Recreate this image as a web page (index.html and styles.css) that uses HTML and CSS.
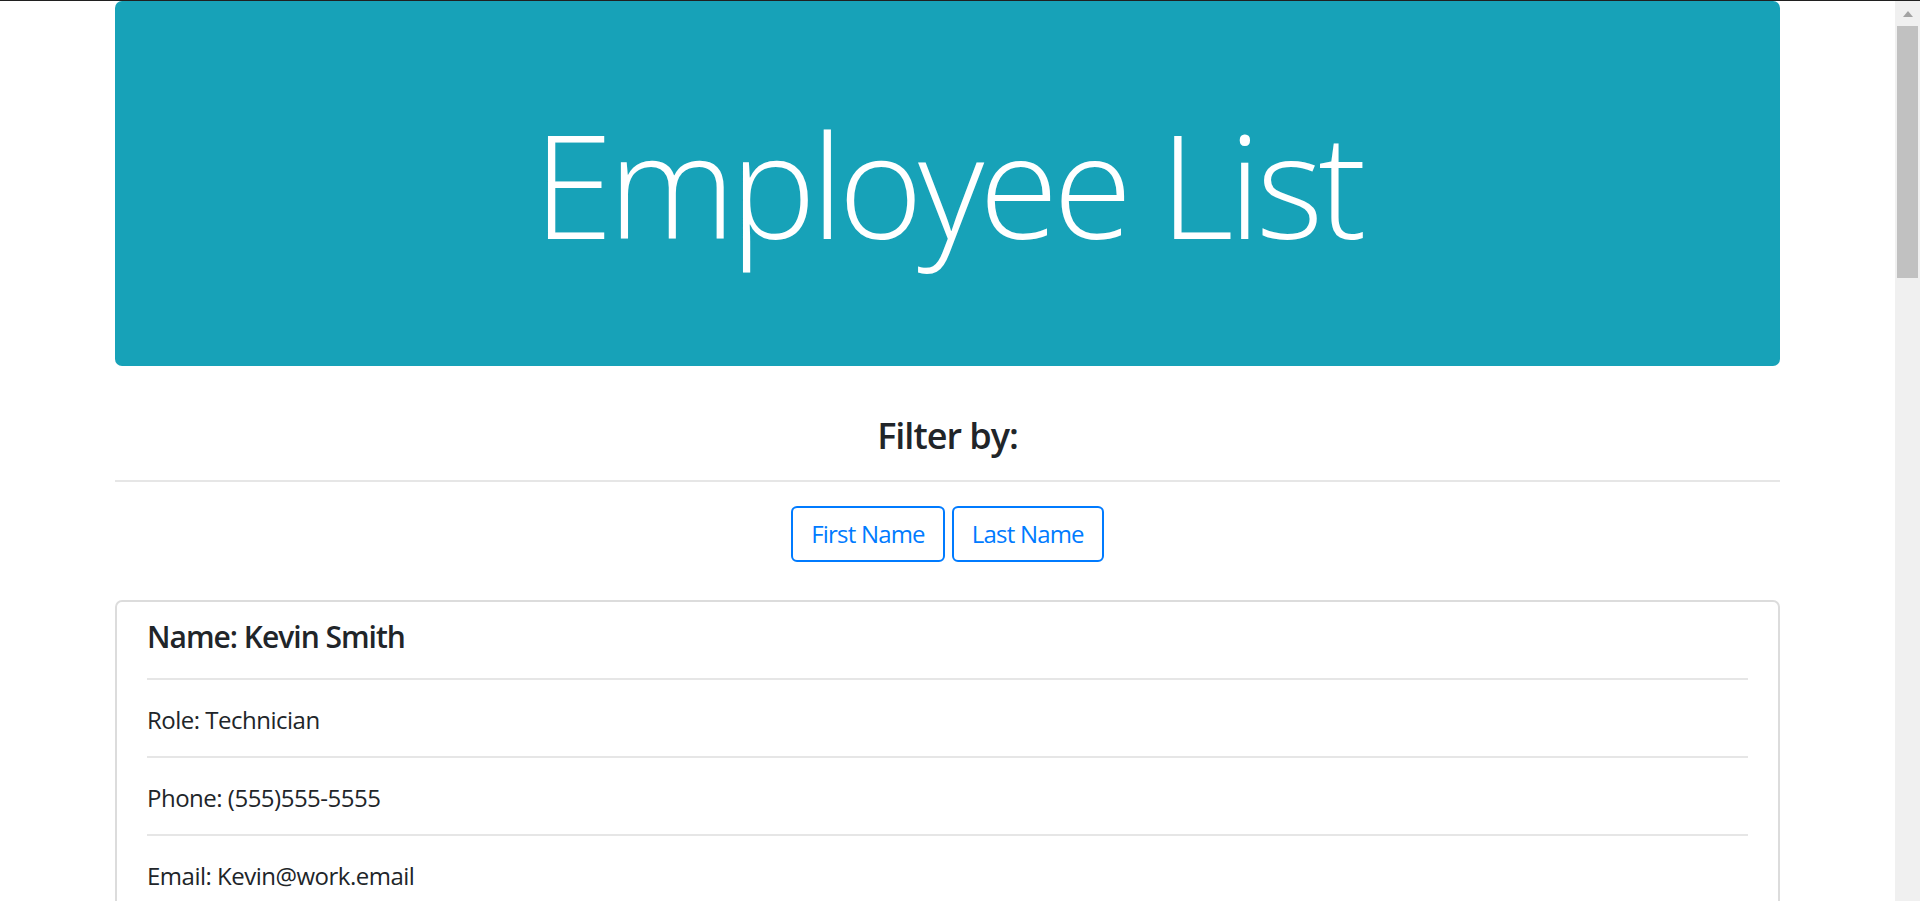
FILE: index.html
```html
<!DOCTYPE html>
<html lang="en">
<head>
<meta charset="utf-8">
<title>Employee List</title>
<link rel="stylesheet" href="styles.css">
</head>
<body>
<div class="page">
  <div class="container">
    <div class="jumbotron">
      <h1 class="display">Employee List</h1>
    </div>
    <h4 class="filter-title">Filter by:</h4>
    <hr class="rule">
    <div class="btn-row">
      <button class="btn">First Name</button>
      <button class="btn">Last Name</button>
    </div>
    <div class="card">
      <div class="card-body">
        <div class="row title-row"><h5 class="card-title">Name: Kevin Smith</h5></div>
        <div class="row">Role: Technician</div>
        <div class="row">Phone: (555)555-5555</div>
        <div class="row last-row">Email: Kevin@work.email</div>
      </div>
    </div>
  </div>
</div>
<div class="scrollbar">
  <div class="sb-arrow"></div>
  <div class="sb-thumb"></div>
</div>
</body>
</html>
```

FILE: styles.css
```css
html, body {
  margin: 0;
  padding: 0;
}
body {
  height: 901px;
  box-sizing: border-box;
  border-top: 1px solid #202020;
  display: flex;
  overflow: hidden;
  font-family: "Open Sans", "Noto Sans", sans-serif;
  color: #212529;
  background: #fff;
}
.page {
  flex: 1;
  overflow: hidden;
}
.container {
  width: 1665px;
  margin: 0 auto;
}
.jumbotron {
  background: #17a2b8;
  border-radius: 7px;
  padding: 96px 48px;
  margin-bottom: 48px;
}
.display {
  margin: 0;
  font-size: 144px;
  font-weight: 300;
  line-height: 1.2;
  letter-spacing: -5px;
  color: #fff;
  text-align: center;
}
.filter-title {
  margin: 0;
  font-size: 36px;
  font-weight: 600;
  line-height: 1.2;
  letter-spacing: -1px;
  text-align: center;
}
.rule {
  margin: 23px 0 24px;
  border: 0;
  border-top: 2px solid #e6e6e6;
}
.btn-row {
  display: flex;
  justify-content: center;
  gap: 7px;
  margin-bottom: 38px;
}
.btn {
  font-family: inherit;
  font-size: 24px;
  line-height: 36px;
  letter-spacing: -0.8px;
  padding: 8px 18px;
  border: 2px solid #007bff;
  border-radius: 6px;
  color: #007bff;
  background: transparent;
}
.card {
  border: 2px solid #dcdcdc;
  border-radius: 7px;
}
.card-body {
  padding: 0 30px;
}
.row {
  font-size: 24px;
  line-height: 36px;
  letter-spacing: -0.5px;
  padding: 22px 0 18px;
  border-bottom: 2px solid #e6e6e6;
}
.last-row {
  border-bottom: 0;
}
.card-title {
  margin: 0;
  font-size: 30px;
  font-weight: 600;
  line-height: 36px;
  letter-spacing: -1px;
}
.title-row {
  padding: 17px 0 23px;
}
.scrollbar {
  width: 25px;
  background: #f0f0f0;
  display: flex;
  flex-direction: column;
  align-items: center;
}
.sb-arrow {
  margin-top: 10px;
  width: 0;
  height: 0;
  border-left: 5px solid transparent;
  border-right: 5px solid transparent;
  border-bottom: 6px solid #a3a3a3;
}
.sb-thumb {
  margin-top: 9px;
  width: 21px;
  height: 252px;
  background: #c1c1c1;
}
```
